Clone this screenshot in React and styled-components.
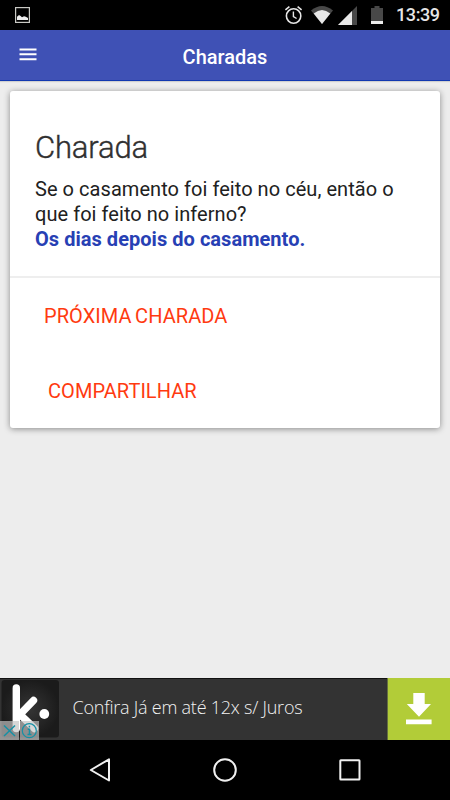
import React from "react";
import styled, { createGlobalStyle } from "styled-components";

const GlobalStyle = createGlobalStyle`
  * {
    box-sizing: border-box;
  }
  body {
    margin: 0;
    background: #ededed;
    font-family: Roboto, "Liberation Sans", sans-serif;
  }
`;

const Screen = styled.div`
  display: flex;
  flex-direction: column;
  width: 450px;
  height: 800px;
  overflow: hidden;
  background: #ededed;
`;

const StatusBar = styled.div`
  display: flex;
  align-items: center;
  height: 30px;
  padding: 0 10px 0 15px;
  background: #000;
  color: #e6e6e6;
  svg {
    flex: none;
    display: block;
  }
`;

const StatusIcons = styled.div`
  display: flex;
  align-items: center;
  margin-left: auto;
`;

const Clock = styled.span`
  width: 44px;
  margin-left: 12px;
  font-size: 18px;
  font-weight: 500;
  line-height: 30px;
  letter-spacing: -0.4px;
`;

const Header = styled.header`
  display: grid;
  grid-template-columns: 56px 1fr 56px;
  align-items: center;
  flex: none;
  height: 51px;
  background: #3f51b5;
  border-bottom: 1px solid #1238b0;
  box-shadow: 0 1px 1px rgba(0, 0, 0, 0.12);
`;

const MenuButton = styled.button`
  height: 50px;
  padding: 0 0 2px 19px;
  border: 0;
  background: none;
  color: #fff;
  svg {
    display: block;
  }
`;

const Title = styled.h1`
  margin: 0;
  padding-top: 3px;
  color: #fff;
  font-size: 20px;
  font-weight: 500;
  line-height: 24px;
  letter-spacing: 0;
  text-align: center;
`;

const Content = styled.main`
  flex: 1;
  padding: 10px 10px 0;
`;

const Card = styled.section`
  height: 337px;
  border-radius: 3px;
  background: #fff;
  box-shadow: 0 1px 6px rgba(0, 0, 0, 0.42);
`;

const CardBody = styled.div`
  height: 187px;
  padding: 38px 25px 0;
  border-bottom: 2px solid #eee;
`;

const CardTitle = styled.h2`
  margin: 0 0 10px;
  color: #303030;
  font-size: 31px;
  font-weight: 300;
  line-height: 38px;
  letter-spacing: -0.15px;
  -webkit-text-stroke: 0.4px #303030;
`;

const Text = styled.p`
  margin: 0;
  color: #212121;
  font-size: 20px;
  line-height: 25px;
  letter-spacing: 0.05px;
  white-space: nowrap;
`;

const Answer = styled(Text)`
  color: #2740b4;
  font-weight: 700;
  letter-spacing: 0.04px;
`;

const Actions = styled.div`
  display: flex;
  flex-direction: column;
  align-items: flex-start;
`;

const Action = styled.button`
  height: 75px;
  margin: 0;
  padding: 0 0 0 ${props => props.$inset}px;
  border: 0;
  background: none;
  color: #ff3a10;
  font: 400 20px/24px Roboto, sans-serif;
  letter-spacing: 0.05px;
  word-spacing: -1.4px;
  text-transform: uppercase;
`;

const Ad = styled.aside`
  display: flex;
  align-items: stretch;
  flex: none;
  height: 62px;
  background: #333;
  border-top: 1px solid #111;
`;

const AdLogo = styled.div`
  position: relative;
  width: 60px;
  svg {
    display: block;
  }
`;

const AdChoices = styled.div`
  position: absolute;
  left: 0;
  bottom: 0;
`;

const AdText = styled.span`
  flex: 1;
  padding-left: 12.6px;
  color: #f2f2f2;
  font: 300 18px/57px "Open Sans", sans-serif;
  letter-spacing: -0.23px;
`;

const Download = styled.div`
  width: 63px;
  margin-top: -1px;
  background: #b2cc38;
  svg {
    display: block;
  }
`;

const NavBar = styled.nav`
  display: grid;
  grid-template-columns: repeat(3, 125px);
  justify-content: center;
  justify-items: center;
  align-items: center;
  flex: none;
  height: 60px;
  background: #000;
  svg {
    fill: none;
    stroke: #f0f0f0;
    stroke-width: 2;
    stroke-linejoin: round;
  }
`;

const PictureIcon = () => (
  <svg width="15" height="16" viewBox="0 0 15 16">
    <rect x="0.6" y="0.6" width="13.8" height="14.8" fill="none" stroke="#c9c9c4" strokeWidth="1.2" />
    <path d="M2 13V9.8l2-1.9 1.6 1.2L7 10.2l2-1 1.8.6L13 11v2z" fill="#eee" />
  </svg>
);

const StatusGlyphs = () => (
  <svg width="100" height="30" viewBox="284 0 100 30">
    <g fill="none" stroke="#e6e6e6">
      <circle cx="293.6" cy="16" r="7.2" strokeWidth="1.6" />
      <path d="M293.4 11.5v5l3.2 2" strokeWidth="1.4" />
      <path d="M285.4 9.8l4-3.2M301.6 9.8l-4-3.2" strokeWidth="1.6" />
    </g>
    <path d="M311 10.5Q322 1.5 333 10.5L322 24z" fill="#484848" />
    <path d="M313.7 13.4Q322 6.4 330.3 13.4L322 24z" fill="#e8e8e8" />
    <path d="M357 6v19h-19z" fill="#484848" />
    <path d="M352 11v14h-14z" fill="#e8e8e8" />
    <path d="M371 8h3.5V6h5v2H383v13h-12z" fill="#484848" />
    <path d="M371 21h12v3h-12z" fill="#ededed" />
  </svg>
);

const MenuIcon = () => (
  <svg width="18" height="13" viewBox="0 0 18 13">
    <path d="M0.5 1.5h17M0.5 6.3h17M0.5 11.2h17" stroke="currentColor" strokeWidth="1.9" />
  </svg>
);

const LogoMark = () => (
  <svg width="60" height="61" viewBox="0 679 60 61">
    <defs>
      <radialGradient id="tile">
        <stop offset="0" stopColor="#353535" />
        <stop offset="1" stopColor="#1b1b1b" />
      </radialGradient>
    </defs>
    <rect x="1.5" y="680" width="57.5" height="57.5" rx="3" fill="url(#tile)" />
    <g fill="none" stroke="#fff" strokeWidth="7.4" strokeLinecap="round">
      <path d="M16.3 688v40.5" />
      <path d="M33.5 700.5L20 714.5l14.5 14" />
    </g>
    <circle cx="44.3" cy="714" r="4.9" fill="#fff" />
  </svg>
);

const AdChoicesIcon = () => (
  <svg width="39" height="19" viewBox="0 0 39 19">
    <path d="M0 0h19v19H0zM20 0h19v19H20z" fill="#c4c4c4" fillOpacity="0.68" />
    <g fill="none" stroke="#1690a5" strokeWidth="1.5">
      <path d="M4 4.5l11 10.5M15 4.5L4 15" />
      <circle cx="29.3" cy="9.7" r="7" strokeWidth="1.2" />
      <path d="M27.7 8.3h1.8v5.2M27.5 13.5h4M29.4 4.8v1.8" />
    </g>
  </svg>
);

const DownloadIcon = () => (
  <svg width="63" height="62" viewBox="387 678 63 62">
    <path d="M387 678h0.6v62h-0.6z" fill="#333345" />
    <path d="M413.3 693h11.4v11h6.3L419 716.7 406.8 704h6.5zM406 719.6h25.6v4.6H406z" fill="#fff" />
  </svg>
);

const App = () => (
  <Screen>
    <GlobalStyle />
    <StatusBar>
      <PictureIcon />
      <StatusIcons>
        <StatusGlyphs />
        <Clock>13:39</Clock>
      </StatusIcons>
    </StatusBar>
    <Header>
      <MenuButton aria-label="Menu">
        <MenuIcon />
      </MenuButton>
      <Title>Charadas</Title>
    </Header>
    <Content>
      <Card>
        <CardBody>
          <CardTitle>Charada</CardTitle>
          <Text>
            Se o casamento foi feito no céu, então o
            <br />
            que foi feito no inferno?
          </Text>
          <Answer>Os dias depois do casamento.</Answer>
        </CardBody>
        <Actions>
          <Action $inset={34}>Próxima charada</Action>
          <Action $inset={38}>Compartilhar</Action>
        </Actions>
      </Card>
    </Content>
    <Ad>
      <AdLogo>
        <LogoMark />
        <AdChoices>
          <AdChoicesIcon />
        </AdChoices>
      </AdLogo>
      <AdText>Confira Já em até 12x s/ Juros</AdText>
      <Download>
        <DownloadIcon />
      </Download>
    </Ad>
    <NavBar>
      <svg width="24" height="26" viewBox="88 757 24 26">
        <path d="M90.8 770L109 759.3v21.2z" />
      </svg>
      <svg width="24" height="24" viewBox="0 0 24 24">
        <circle cx="12" cy="12" r="10.8" />
      </svg>
      <svg width="24" height="24" viewBox="0 0 24 24">
        <rect x="2.3" y="2.3" width="19.2" height="19.2" rx="0.5" />
      </svg>
    </NavBar>
  </Screen>
);

export default App;
